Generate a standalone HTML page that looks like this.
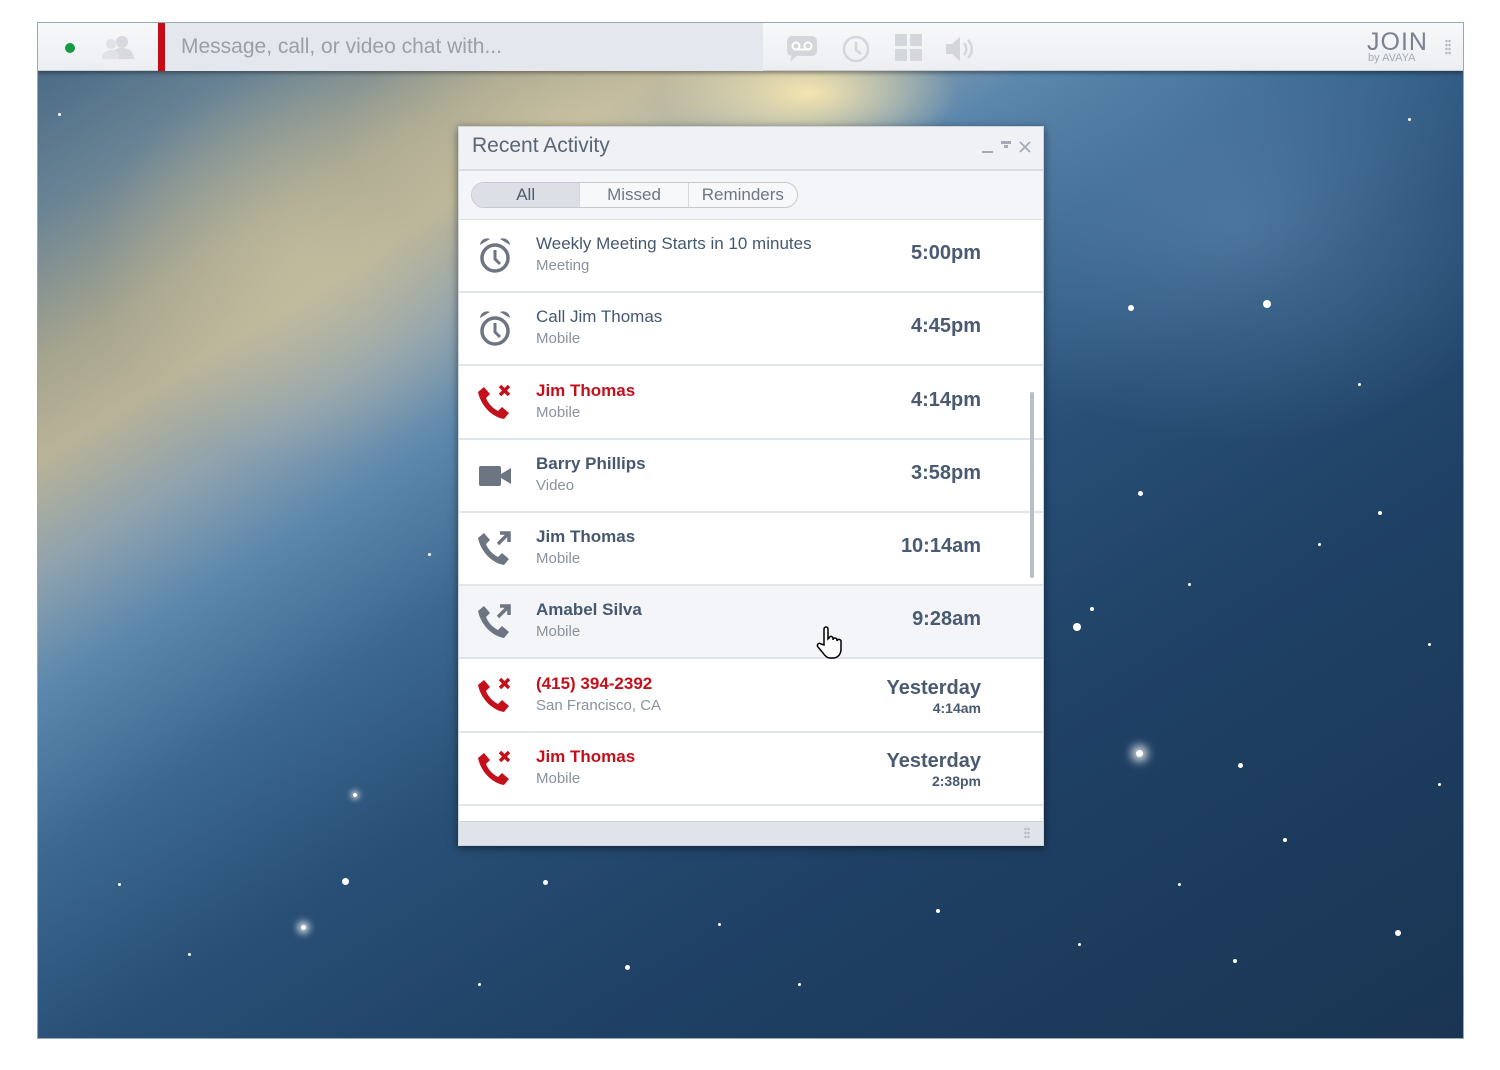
<!DOCTYPE html>
<html><head><meta charset="utf-8"><style>
*{margin:0;padding:0;box-sizing:border-box}
body{width:1500px;height:1070px;background:#fff;position:relative;overflow:hidden;font-family:"Liberation Sans",sans-serif}
#win{position:absolute;left:37px;top:22px;width:1427px;height:1017px;overflow:hidden;border:1px solid #9aa;
background:
radial-gradient(ellipse 150px 70px at 770px 70px,rgba(255,235,175,.9),rgba(255,235,175,0) 100%),
radial-gradient(ellipse 260px 120px at 560px 110px,rgba(215,205,170,.55),rgba(215,205,170,0) 100%),
radial-gradient(ellipse 200px 200px at 260px 240px,rgba(205,198,165,.5),rgba(205,198,165,0) 100%),
radial-gradient(ellipse 300px 220px at 1200px 200px,rgba(110,150,190,.45),rgba(110,150,190,0) 100%),
linear-gradient(148deg,#3f6383 0%,#6a8494 10%,#a7a58e 18%,#b9b398 23%,#8ea2ae 29%,#5d88ad 35%,#3c6890 44%,#284f76 55%,#1f4165 70%,#1a3553 100%)}
.star{position:absolute;background:#fff;border-radius:50%}
#top{position:absolute;left:0;top:0;width:100%;height:48px;background:linear-gradient(#f7f8fa,#eceef2);border-bottom:1px solid #c7ccd3;box-shadow:0 2px 4px rgba(0,0,0,.4)}
#search{position:absolute;left:120px;top:0;width:605px;height:48px;background:#e4e7ed;border-left:7px solid #c40b16}
#search span{position:absolute;left:16px;top:12px;font-size:21px;color:#9aa0a8}
#panel{position:absolute;left:420px;top:103px;width:586px;height:720px;background:#fff;box-shadow:0 2px 8px rgba(0,0,0,.5);border:1px solid #cfd4da}
#ptitle{height:44px;background:#eff1f5;border-bottom:2px solid #d9dde3;font-size:21px;color:#5b6675;padding:7px 0 0 13px;position:relative}
#tabsbar{height:49px;background:#f4f5f8;border-bottom:1px solid #dde1e6;position:relative}
#tabs{position:absolute;left:12px;top:11px;width:327px;height:26px;border:1px solid #c6cbd2;border-radius:13px;background:#f7f8fa;display:flex;font-size:17px;color:#6d7784;overflow:hidden}
#tabs div{text-align:center;line-height:24px;border-right:1px solid #d3d7dd}
.row{position:absolute;left:0;width:584px;height:73px;border-bottom:2px solid #e1e4e9}
.row .t{position:absolute;left:77px;top:14px;font-size:17px;color:#465870}
.row .t.b{font-weight:bold}
.row .s{position:absolute;left:77px;top:37px;font-size:15px;color:#8a929c}
.row .tm{position:absolute;right:62px;top:22px;font-size:20px;font-weight:bold;color:#4a5a70}
.row .y{position:absolute;right:62px;top:17px;text-align:right;color:#4a5a70;font-weight:bold}
.red{color:#c4101b!important;font-weight:bold}
.ic{position:absolute;left:18px;top:16px}
</style></head><body>
<div id="win">
<div class="star" style="left:1090px;top:282px;width:6px;height:6px"></div>
<div class="star" style="left:1225px;top:277px;width:8px;height:8px"></div>
<div class="star" style="left:1100px;top:468px;width:5px;height:5px"></div>
<div class="star" style="left:1035px;top:600px;width:8px;height:8px"></div>
<div class="star" style="left:1098px;top:727px;width:7px;height:7px;box-shadow:0 0 10px 4px #fff"></div>
<div class="star" style="left:1200px;top:740px;width:5px;height:5px"></div>
<div class="star" style="left:1357px;top:907px;width:6px;height:6px"></div>
<div class="star" style="left:304px;top:855px;width:7px;height:7px"></div>
<div class="star" style="left:263px;top:902px;width:5px;height:5px;box-shadow:0 0 8px 3px #fff"></div>
<div class="star" style="left:505px;top:857px;width:5px;height:5px"></div>
<div class="star" style="left:587px;top:942px;width:5px;height:5px"></div>
<div class="star" style="left:315px;top:770px;width:4px;height:4px;box-shadow:0 0 6px 2px #ddd"></div>
<div class="star" style="left:898px;top:886px;width:4px;height:4px"></div>
<div class="star" style="left:1245px;top:815px;width:4px;height:4px"></div>
<div class="star" style="left:1340px;top:488px;width:4px;height:4px"></div>
<div class="star" style="left:1052px;top:584px;width:4px;height:4px"></div>
<div class="star" style="left:1195px;top:936px;width:4px;height:4px"></div>
<div class="star" style="left:1320px;top:360px;width:3px;height:3px"></div>
<div class="star" style="left:1390px;top:620px;width:3px;height:3px"></div>
<div class="star" style="left:1150px;top:560px;width:3px;height:3px"></div>
<div class="star" style="left:1280px;top:520px;width:3px;height:3px"></div>
<div class="star" style="left:1400px;top:760px;width:3px;height:3px"></div>
<div class="star" style="left:1140px;top:860px;width:3px;height:3px"></div>
<div class="star" style="left:1040px;top:920px;width:3px;height:3px"></div>
<div class="star" style="left:760px;top:960px;width:3px;height:3px"></div>
<div class="star" style="left:680px;top:900px;width:3px;height:3px"></div>
<div class="star" style="left:440px;top:960px;width:3px;height:3px"></div>
<div class="star" style="left:150px;top:930px;width:3px;height:3px"></div>
<div class="star" style="left:80px;top:860px;width:3px;height:3px"></div>
<div class="star" style="left:390px;top:530px;width:3px;height:3px"></div>
<div class="star" style="left:1370px;top:95px;width:3px;height:3px"></div>
<div class="star" style="left:20px;top:90px;width:3px;height:3px"></div>
<div id="top">
 <div style="position:absolute;left:27px;top:20px;width:10px;height:10px;border-radius:50%;background:#139a43"></div>
 <svg style="position:absolute;left:62px;top:12px" width="38" height="24" viewBox="0 0 38 24"><circle cx="22" cy="7" r="6" fill="#d6d9de"/><path d="M10 24c0-7 5-11 12-11s12 4 12 11z" fill="#d6d9de"/><circle cx="11" cy="9" r="5" fill="#e0e2e6"/><path d="M2 24c0-6 4-9 9-9s7 2 8 4v5z" fill="#e0e2e6"/></svg>
 <div id="search"><span>Message, call, or video chat with...</span></div>
 <svg style="position:absolute;left:748px;top:12px" width="32" height="28" viewBox="0 0 32 28"><rect x="1" y="1" width="30" height="20" rx="5" fill="#d3d6db"/><path d="M6 20l-2 7 8-7z" fill="#d3d6db"/><circle cx="10" cy="11" r="3.5" fill="none" stroke="#fff" stroke-width="2"/><circle cx="22" cy="11" r="3.5" fill="none" stroke="#fff" stroke-width="2"/><path d="M10 14.5h12" stroke="#fff" stroke-width="2"/></svg>
 <svg style="position:absolute;left:804px;top:12px" width="28" height="28" viewBox="0 0 28 28"><circle cx="14" cy="14" r="12" fill="none" stroke="#d3d6db" stroke-width="2.5"/><path d="M14 7v8l5 4" fill="none" stroke="#d3d6db" stroke-width="2.5"/></svg>
 <svg style="position:absolute;left:857px;top:11px" width="28" height="28" viewBox="0 0 28 28" fill="#d3d6db"><rect x="0" y="0" width="12" height="12"/><rect x="15" y="0" width="12" height="12"/><rect x="0" y="15" width="12" height="12"/><rect x="15" y="15" width="12" height="12"/></svg>
 <svg style="position:absolute;left:906px;top:12px" width="32" height="28" viewBox="0 0 32 28"><path d="M2 9h6l8-7v24l-8-7H2z" fill="#d3d6db"/><path d="M20 8c3 3 3 9 0 12M24 5c5 5 5 13 0 18" fill="none" stroke="#d3d6db" stroke-width="2.5"/></svg>
 <div style="position:absolute;left:1329px;top:5px;font-size:25px;color:#7a8290;letter-spacing:1px">JOIN</div>
 <div style="position:absolute;left:1330px;top:29px;font-size:11px;color:#a5abb4">by AVAYA</div>
 <div style="position:absolute;left:1407px;top:16px;width:6px;height:16px;background:radial-gradient(circle,#b5bac2 1px,transparent 1.5px) 0 0/3px 4px"></div>
</div>
<div id="panel">
 <div id="ptitle">Recent Activity
  <div style="position:absolute;right:50px;top:24px;width:11px;height:2px;background:#a4abb5"></div>
  <div style="position:absolute;right:32px;top:14px;width:10px;height:3px;background:#a4abb5"></div>
  <div style="position:absolute;right:35px;top:18px;width:4px;height:3px;background:#a4abb5"></div>
  <svg style="position:absolute;right:12px;top:14px" width="12" height="12" viewBox="0 0 12 12"><path d="M1 1l10 10M11 1L1 11" stroke="#a4abb5" stroke-width="1.8"/></svg>
 </div>
 <div id="tabsbar"><div id="tabs"><div style="width:109px;background:#dcdfe5;color:#4f5b6c">All</div><div style="width:109px">Missed</div><div style="width:109px;border:0">Reminders</div></div></div>
 <div class="row" style="top:93px"><svg class="ic" width="36" height="40" viewBox="0 0 36 40"><circle cx="18" cy="22" r="13" fill="none" stroke="#6d7583" stroke-width="3.5"/><path d="M18 14v9l5 5" fill="none" stroke="#6d7583" stroke-width="3"/><path d="M3 9a7 7 0 0 1 10-6zM33 9a7 7 0 0 0-10-6z" fill="#6d7583"/></svg><div class="t">Weekly Meeting Starts in 10 minutes</div><div class="s">Meeting</div><div class="tm">5:00pm</div></div>
 <div class="row" style="top:166px"><svg class="ic" width="36" height="40" viewBox="0 0 36 40"><circle cx="18" cy="22" r="13" fill="none" stroke="#6d7583" stroke-width="3.5"/><path d="M18 14v9l5 5" fill="none" stroke="#6d7583" stroke-width="3"/><path d="M3 9a7 7 0 0 1 10-6zM33 9a7 7 0 0 0-10-6z" fill="#6d7583"/></svg><div class="t">Call Jim Thomas</div><div class="s">Mobile</div><div class="tm">4:45pm</div></div>
 <div class="row" style="top:240px"><svg class="ic" width="40" height="40" viewBox="0 0 40 40"><path d="M7 4l6 7-4 4c2 5 6 10 12 13l4-4 7 6-5 6C15 34 4 23 1 9z" fill="#c4101b"/><path d="M23 3l9 9M32 3l-9 9" stroke="#c4101b" stroke-width="3.5"/></svg><div class="t red">Jim Thomas</div><div class="s">Mobile</div><div class="tm">4:14pm</div></div>
 <div class="row" style="top:313px"><svg class="ic" style="top:24px" width="36" height="24" viewBox="0 0 36 24"><rect x="2" y="2" width="22" height="20" rx="2" fill="#6d7583"/><path d="M24 10l10-6v16l-10-6z" fill="#6d7583"/></svg><div class="t b">Barry Phillips</div><div class="s">Video</div><div class="tm">3:58pm</div></div>
 <div class="row" style="top:386px"><svg class="ic" width="40" height="40" viewBox="0 0 40 40"><path d="M7 4l6 7-4 4c2 5 6 10 12 13l4-4 7 6-5 6C15 34 4 23 1 9z" fill="#6d7583"/><path d="M21 15l10-10M23 4h9v9" fill="none" stroke="#6d7583" stroke-width="3.5"/></svg><div class="t b">Jim Thomas</div><div class="s">Mobile</div><div class="tm">10:14am</div></div>
 <div class="row" style="top:459px;background:#f4f5f8"><svg class="ic" width="40" height="40" viewBox="0 0 40 40"><path d="M7 4l6 7-4 4c2 5 6 10 12 13l4-4 7 6-5 6C15 34 4 23 1 9z" fill="#6d7583"/><path d="M21 15l10-10M23 4h9v9" fill="none" stroke="#6d7583" stroke-width="3.5"/></svg><div class="t b">Amabel Silva</div><div class="s">Mobile</div><div class="tm">9:28am</div>
  <svg style="position:absolute;left:357px;top:39px" width="26" height="34" viewBox="0 0 26 34"><path d="M8 20V4a2 2 0 0 1 4 0v10l1-1a2 2 0 0 1 4 1v1a2 2 0 0 1 4 0v1a2 2 0 0 1 4 1v7c0 5-3 9-8 9h-3c-3 0-5-2-7-5l-5-6a2 2 0 0 1 3-3z" fill="#fff" stroke="#000" stroke-width="1.5"/></svg></div>
 <div class="row" style="top:533px"><svg class="ic" width="40" height="40" viewBox="0 0 40 40"><path d="M7 4l6 7-4 4c2 5 6 10 12 13l4-4 7 6-5 6C15 34 4 23 1 9z" fill="#c4101b"/><path d="M23 3l9 9M32 3l-9 9" stroke="#c4101b" stroke-width="3.5"/></svg><div class="t red">(415) 394-2392</div><div class="s">San Francisco, CA</div><div class="y"><div style="font-size:20px">Yesterday</div><div style="font-size:14px">4:14am</div></div></div>
 <div class="row" style="top:606px"><svg class="ic" width="40" height="40" viewBox="0 0 40 40"><path d="M7 4l6 7-4 4c2 5 6 10 12 13l4-4 7 6-5 6C15 34 4 23 1 9z" fill="#c4101b"/><path d="M23 3l9 9M32 3l-9 9" stroke="#c4101b" stroke-width="3.5"/></svg><div class="t red">Jim Thomas</div><div class="s">Mobile</div><div class="y"><div style="font-size:20px">Yesterday</div><div style="font-size:14px">2:38pm</div></div></div>
 <div style="position:absolute;left:571px;top:265px;width:4px;height:186px;background:#b9bec6;border-radius:2px"></div>
 <div style="position:absolute;left:0;top:694px;width:584px;height:24px;background:#dfe3ea;border-top:1px solid #cdd2d9"></div>
 <div style="position:absolute;left:565px;top:700px;width:6px;height:12px;background:radial-gradient(circle,#b5bac2 1px,transparent 1.5px) 0 0/3px 4px"></div>
</div>
</div>
</body></html>
